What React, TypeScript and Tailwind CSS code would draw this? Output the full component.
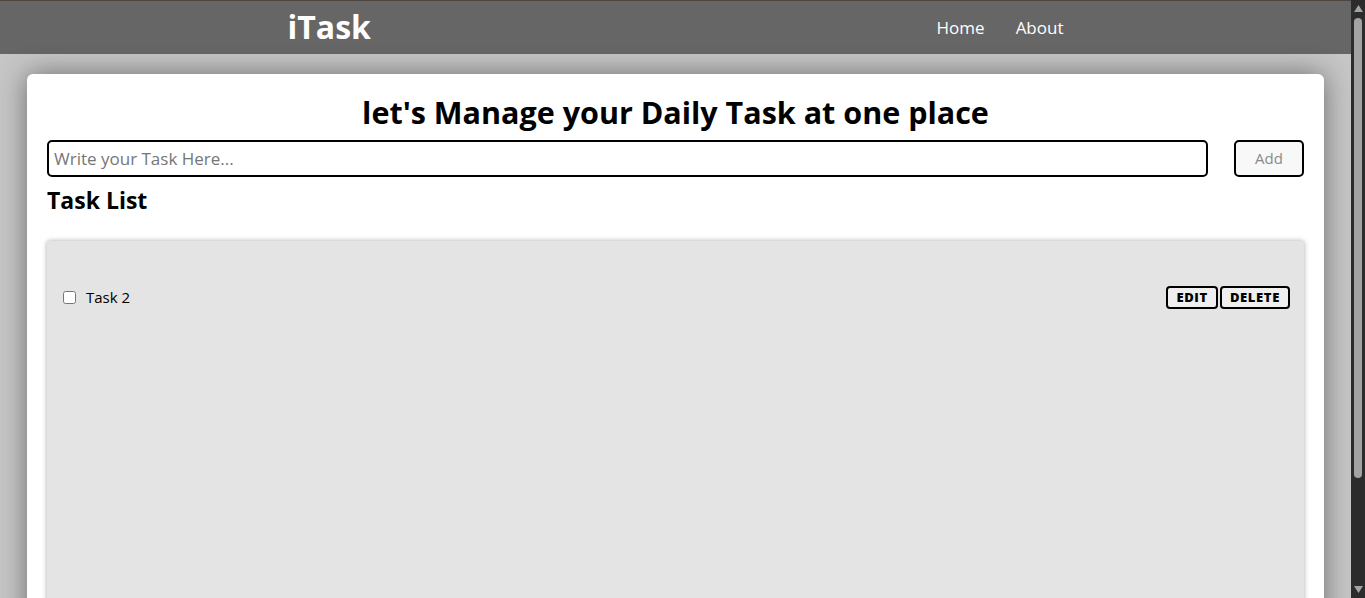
import React, { useState } from 'react';

interface Todo {
  id: number;
  text: string;
  done: boolean;
}

const Navbar: React.FC = () => {
  return (
    <nav className="h-[54px] bg-[#666666] border-t border-[#4f453e] text-white">
      <div className="w-[776px] mx-auto h-full flex items-center justify-between">
        <span className="text-[32px] font-bold leading-none -mt-[1px]">iTask</span>
        <ul className="flex items-center gap-[31px] text-[17px]">
          <li className="cursor-pointer">Home</li>
          <li className="cursor-pointer">About</li>
        </ul>
      </div>
    </nav>
  );
};

// page scrollbar as it shows in the screenshot
const ScrollTrack: React.FC = () => {
  return (
    <aside className="w-[14px] h-screen bg-[#2c2c2c] flex flex-col items-center pt-[5px] pb-[5px]">
      <svg width="9" height="7" viewBox="0 0 9 7" className="shrink-0">
        <path d="M4.5 0L9 7H0z" fill="#a3a3a3" />
      </svg>
      <div className="w-[8px] h-[460px] mt-[6px] rounded-full bg-[#a3a3a3]" />
      <div className="flex-1" />
      <svg width="9" height="7" viewBox="0 0 9 7" className="shrink-0">
        <path d="M0 0H9L4.5 7z" fill="#a3a3a3" />
      </svg>
    </aside>
  );
};

const App: React.FC = () => {
  const [todo, setTodo] = useState('');
  const [todos, setTodos] = useState<Todo[]>([{ id: 2, text: 'Task 2', done: false }]);

  const handleAdd = () => {
    if (!todo.trim()) return;
    setTodos([...todos, { id: Date.now(), text: todo, done: false }]);
    setTodo('');
  };

  return (
    <div className="flex h-screen overflow-hidden bg-[#c6c6c6] font-['Open_Sans',sans-serif] text-black">
      <main className="flex-1 min-w-0 h-screen overflow-hidden">
        <Navbar />

        {/* Main card */}
        <div className="w-[96%] mx-auto mt-5 bg-white rounded-md p-5 pb-8 shadow-[0_0_28px_rgba(0,0,0,0.45)]">
          <h1 className="text-center text-[30.5px] font-bold leading-[36px] mb-[10px]">
            let's Manage your Daily Task at one place
          </h1>

          <div className="flex items-center gap-[26px]">
            <input
              type="text"
              value={todo}
              onChange={(e) => setTodo(e.target.value)}
              placeholder="Write your Task Here..."
              className="flex-1 h-[37px] border-2 border-black rounded-[5px] px-[5px] text-[17px] placeholder:text-[#767676] outline-none"
            />
            <button
              onClick={handleAdd}
              disabled={todo.length <= 3}
              className="w-[70px] h-[37px] border-2 border-black rounded-[5px] bg-[#f8f8f8] text-[15px] text-[#8a8a8a]"
            >
              Add
            </button>
          </div>

          <h2 className="text-[23px] font-bold leading-[30px] mt-[8px] mb-[26px]">Task List</h2>

          {/* Task panel */}
          <div className="bg-[#e4e4e4] rounded-[3px] shadow-[0_0_5px_rgba(0,0,0,0.35)] min-h-[420px] pl-4 pr-[14px] pt-[45px] pb-6">
            {todos.map((item) => (
              <div key={item.id} className="flex items-center justify-between h-[23px]">
                <div className="flex items-center gap-[10px]">
                  <input
                    type="checkbox"
                    checked={item.done}
                    onChange={() =>
                      setTodos(todos.map((t) => (t.id === item.id ? { ...t, done: !t.done } : t)))
                    }
                    className="w-[13px] h-[13px] m-0"
                  />
                  <span className={`text-[15px] ${item.done ? 'line-through' : ''}`}>{item.text}</span>
                </div>
                <div className="flex items-center gap-[2px]">
                  <button className="h-[23px] px-[8px] border-2 border-black rounded-[4px] bg-[#efefef] text-[13px] leading-none font-extrabold tracking-[0.05em]">
                    EDIT
                  </button>
                  <button
                    onClick={() => setTodos(todos.filter((t) => t.id !== item.id))}
                    className="h-[23px] px-[8px] border-2 border-black rounded-[4px] bg-[#efefef] text-[13px] leading-none font-extrabold tracking-[0.05em]"
                  >
                    DELETE
                  </button>
                </div>
              </div>
            ))}
          </div>
        </div>
      </main>
      <ScrollTrack />
    </div>
  );
};

export default App;
